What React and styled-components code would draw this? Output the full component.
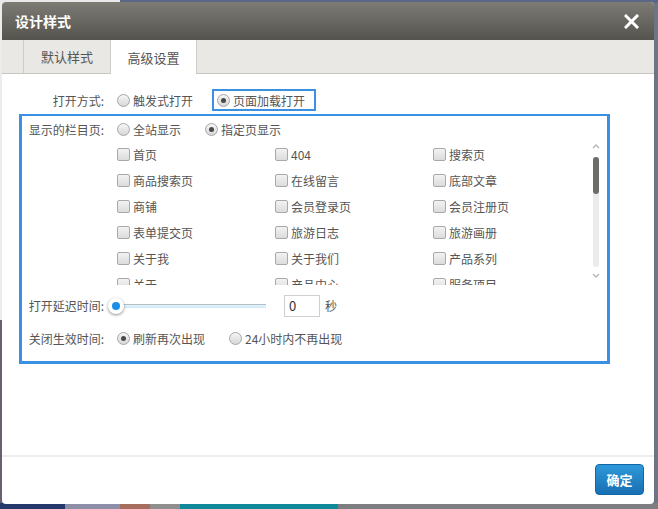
import styled, { createGlobalStyle } from "styled-components";

const GlobalStyle = createGlobalStyle`
  * { box-sizing: border-box; }
  html, body { margin: 0; padding: 0; }
  body {
    font-family: "Microsoft YaHei", "Noto Sans CJK SC", "Noto Sans", sans-serif;
    font-size: 12px;
    color: #555;
  }
`;

const pages = [
  ["首页", "404", "搜索页"],
  ["商品搜索页", "在线留言", "底部文章"],
  ["商铺", "会员登录页", "会员注册页"],
  ["表单提交页", "旅游日志", "旅游画册"],
  ["关于我", "关于我们", "产品系列"],
  ["关于", "产品中心", "服务项目"],
];

export default function App() {
  return (
    <Page>
      <GlobalStyle />
      <Dialog>
        <Header>
          <h1>设计样式</h1>
          <Close aria-label="关闭">
            <svg width="15" height="15" viewBox="0 0 15 15">
              <path d="M2 2 L13 13 M13 2 L2 13" stroke="#fff" strokeWidth="3" strokeLinecap="square" />
            </svg>
          </Close>
        </Header>
        <Tabs>
          <Tab>默认样式</Tab>
          <Tab active>高级设置</Tab>
        </Tabs>
        <Body>
          <Row first>
            <Label>打开方式:</Label>
            <Options>
              <Option>
                <Radio />
                触发式打开
              </Option>
              <Highlight>
                <Option>
                  <Radio checked />
                  页面加载打开
                </Option>
              </Highlight>
            </Options>
          </Row>
          <Group>
            <Row>
              <Label>显示的栏目页:</Label>
              <Options>
                <Option>
                  <Radio />
                  全站显示
                </Option>
                <Option>
                  <Radio checked />
                  指定页显示
                </Option>
              </Options>
            </Row>
            <ListArea>
              <Grid>
                {pages.flat().map((name) => (
                  <Item key={name}>
                    <Checkbox />
                    {name}
                  </Item>
                ))}
              </Grid>
              <Scrollbar>
                <svg width="8" height="6" viewBox="0 0 8 6">
                  <path d="M1 5 L4 2 L7 5" stroke="#b5b5b5" strokeWidth="1.4" fill="none" />
                </svg>
                <Track>
                  <Thumb />
                </Track>
                <svg width="8" height="6" viewBox="0 0 8 6">
                  <path d="M1 1 L4 4 L7 1" stroke="#b5b5b5" strokeWidth="1.4" fill="none" />
                </svg>
              </Scrollbar>
            </ListArea>
            <SliderRow>
              <Label>打开延迟时间:</Label>
              <Slider>
                <SliderKnob />
              </Slider>
              <NumberBox defaultValue="0" />
              <Unit>秒</Unit>
            </SliderRow>
            <Row>
              <Label>关闭生效时间:</Label>
              <Options>
                <Option>
                  <Radio checked />
                  刷新再次出现
                </Option>
                <Option>
                  <Radio />
                  24小时内不再出现
                </Option>
              </Options>
            </Row>
          </Group>
        </Body>
        <Footer>
          <Button>确定</Button>
        </Footer>
      </Dialog>
    </Page>
  );
}

const Page = styled.div`
  width: 658px;
  height: 509px;
  padding: 2px 0 0 2px;
  overflow: hidden;
  background:
    linear-gradient(to right, #e9e9e9 0 120px, #5a6787 120px) top / 100% 3px no-repeat,
    linear-gradient(to right, #24386a 0 65px, #8d8fa9 65px 120px, #a56e5f 120px 150px,
      #8f8f8f 150px 180px, #108a9a 180px 338px, #7c7e7f 338px) bottom / 100% 6px no-repeat,
    linear-gradient(#ececec 0 320px, #6b5f73 320px) left / 3px 100% no-repeat,
    #6d7482;
`;

const Dialog = styled.div`
  width: 652px;
  height: 502px;
  display: flex;
  flex-direction: column;
  background: #fff;
  border-radius: 4px;
  overflow: hidden;
`;

const Header = styled.div`
  height: 38px;
  flex: none;
  display: flex;
  align-items: center;
  justify-content: space-between;
  padding: 0 15px 0 13px;
  background: linear-gradient(#7d7b74, #55534e);
  h1 {
    margin: 0;
    font-size: 14px;
    font-weight: bold;
    color: #fff;
  }
`;

const Close = styled.span`
  display: flex;
  width: 15px;
  height: 15px;
`;

const Tabs = styled.div`
  height: 34px;
  flex: none;
  display: flex;
  padding-left: 21px;
  background: #e9e8e4;
  border-bottom: 1px solid #c6c5c1;
`;

const Tab = styled.div`
  width: 87px;
  display: flex;
  align-items: center;
  justify-content: center;
  font-size: 13px;
  color: #555;
  border-left: 1px solid #cfcdc8;
  border-right: ${(p) => (p.active ? "1px solid #cfcdc8" : "none")};
  background: ${(p) => (p.active ? "#fff" : "transparent")};
  margin-bottom: ${(p) => (p.active ? "-1px" : "0")};
`;

const Body = styled.div`
  flex: 1;
  padding: 13px 0 0 17px;
`;

const Row = styled.div`
  height: ${(p) => (p.first ? "26px" : "24px")};
  display: flex;
  align-items: center;
  padding-left: ${(p) => (p.first ? "5px" : "2px")};
`;

const Label = styled.div`
  width: 80px;
  flex: none;
  text-align: right;
  margin-right: 13px;
  color: #555;
`;

const Options = styled.div`
  display: flex;
  align-items: center;
  gap: 24px;
`;

const Option = styled.label`
  display: flex;
  align-items: center;
  color: #555;
  white-space: nowrap;
`;

const Highlight = styled.div`
  display: flex;
  align-items: center;
  height: 22px;
  margin-left: -5px;
  padding: 0 9px 0 3px;
  border: 2px solid #3a90e2;
`;

const Radio = styled.span`
  width: 13px;
  height: 13px;
  margin-right: 3px;
  border-radius: 50%;
  border: 1px solid #a6a6a6;
  background: linear-gradient(#f6f6f6, #d7d7d7);
  display: flex;
  align-items: center;
  justify-content: center;
  flex: none;
  &::after {
    content: "";
    width: 5px;
    height: 5px;
    border-radius: 50%;
    background: ${(p) => (p.checked ? "#4a4a4a" : "transparent")};
  }
`;

const Group = styled.div`
  width: 591px;
  margin-top: 1px;
  border: 3px solid #3a90e2;
  border-top-width: 2px;
  padding-top: 1px;
  padding-bottom: 11px;
`;

const ListArea = styled.div`
  height: 144px;
  display: flex;
`;

const Grid = styled.div`
  flex: 1;
  overflow: hidden;
  padding-left: 95px;
  display: grid;
  grid-template-columns: repeat(3, 158px);
  grid-auto-rows: 26px;
  align-items: center;
`;

const Item = styled.label`
  display: flex;
  align-items: center;
  color: #555;
  white-space: nowrap;
`;

const Checkbox = styled.span`
  width: 13px;
  height: 13px;
  margin-right: 3px;
  border-radius: 2px;
  border: 1px solid #a9a9a9;
  background: linear-gradient(#f2f2f2, #dcdcdc);
  flex: none;
`;

const Scrollbar = styled.div`
  width: 8px;
  margin-right: 7px;
  display: flex;
  flex-direction: column;
  align-items: center;
  padding-top: 2px;
  gap: 6px;
`;

const Track = styled.div`
  width: 6px;
  height: 110px;
  border-radius: 3px;
  background: #ebebeb;
  margin-top: 2px;
`;

const Thumb = styled.div`
  width: 6px;
  height: 37px;
  border-radius: 3px;
  background: #6d6c68;
`;

const SliderRow = styled.div`
  height: 41px;
  display: flex;
  align-items: center;
  padding-left: 2px;
`;

const Slider = styled.div`
  width: 158px;
  height: 16px;
  margin-left: -9px;
  display: flex;
  align-items: center;
  background: linear-gradient(#98a4ab, #e1f2fb 35%, #cfe9f8) 8px center / calc(100% - 8px) 4px no-repeat;
`;

const SliderKnob = styled.div`
  width: 16px;
  height: 16px;
  border-radius: 50%;
  background: #fff;
  box-shadow: 0 1px 3px rgba(0, 0, 0, 0.45);
  display: flex;
  align-items: center;
  justify-content: center;
  &::after {
    content: "";
    width: 8px;
    height: 8px;
    border-radius: 50%;
    background: #1b8de6;
  }
`;

const NumberBox = styled.input`
  width: 36px;
  height: 22px;
  margin-left: 18px;
  padding: 0 4px;
  border: 1px solid #cfcfcf;
  font-family: inherit;
  font-size: 13px;
  color: #333;
  outline: none;
`;

const Unit = styled.span`
  margin-left: 5px;
  color: #555;
`;

const Footer = styled.div`
  height: 49px;
  flex: none;
  border-top: 2px solid #eeeeee;
  display: flex;
  justify-content: flex-end;
  padding: 7px 10px 0 0;
`;

const Button = styled.button`
  width: 49px;
  height: 31px;
  border: 1px solid #1467a6;
  border-radius: 4px;
  background: linear-gradient(#2f98da, #176fb2);
  color: #fff;
  font-family: inherit;
  font-size: 13px;
  font-weight: bold;
  padding: 0;
`;
